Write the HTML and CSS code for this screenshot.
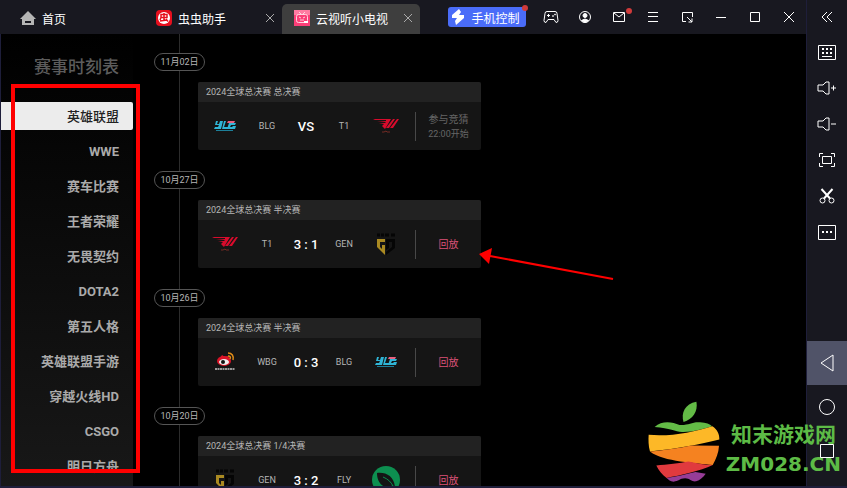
FILE: index.html
```html
<!DOCTYPE html>
<html lang="zh-CN">
<head>
    <meta charset="UTF-8">
    <meta name="viewport" content="width=device-width, initial-scale=1.0">
    <title>云视听小电视</title>
    <link rel="stylesheet" href="styles.css">
</head>
<body>

<!-- shared team logos -->
<svg class="defs" aria-hidden="true">
    <symbol id="logo-blg" viewBox="0 0 24 12">
        <path fill="#2fb5d6" d="M3 1h2l-1 3h2l1-3h3l-1 4-1 4H1l1-2h3l1-2H2zM11 1h2l-2 6h4l-1 2H9zM16 3h7l-1 2h-4l-1 2h2l1-1h3l-1 3h-8z"/>
        <path fill="#e8607f" d="M15 1h7l-1 2h-7z"/>
        <path stroke="#1d7f99" d="M3 10.500h17"/>
    </symbol>
    <symbol id="logo-t1" viewBox="0 0 26 16">
        <path fill="#d80b2c" d="M0 1h18l-6 10-3-3 2-2-5-1h6l1-1-9-1h9v-1H2zM20 1h2l-6 9h-3zM24 1h2l-6 9h-3z"/>
        <path fill="none" stroke="#752b24" d="M9 14h2l2-1 1 1h3"/>
    </symbol>
    <symbol id="logo-gen" viewBox="0 0 20 24">
        <path fill="none" stroke="#050505" stroke-width="3" d="M1 3h3M5 3h3M9 3h4M15 3h4"/>
        <path fill="#aa8a22" d="M1 7h8v3H4v5l2 2v-4h3v10l-4-4-4-4z"/>
        <path fill="#050505" d="M10 7h9v9l-9 7v-3l6-5v-5h-3v6l-3 2z"/>
    </symbol>
    <symbol id="logo-wbg" viewBox="0 0 22 20">
        <ellipse cx="10" cy="9" rx="7" ry="5" fill="#dc1428"/>
        <path fill="#dc1428" d="M4 9l4-6 3 2 3-1 1 4z"/>
        <ellipse cx="10" cy="10" rx="5" ry="3" fill="#eee"/>
        <circle cx="9" cy="10" r="2" fill="#111"/>
        <path fill="none" stroke="#e08c18" stroke-width="1.500" d="M14 1c4 0 6 3 5 7M14 4c2 0 3 1 2 3"/>
        <path stroke="#999" stroke-width="2" stroke-dasharray="2 .5" d="M1 17h20"/>
    </symbol>
    <symbol id="logo-fly" viewBox="0 0 28 28">
        <circle cx="14" cy="14" r="14" fill="#0d8f50"/>
        <path fill="#151515" d="M5 7c10-1 17 4 18 14l-3-2-1 3C10 22 5 16 5 7z"/>
        <path fill="none" stroke="#0d8f50" d="M11 11c5 2 8 5 10 9"/>
    </symbol>
</svg>

<div class="window">
    <header class="titlebar">
        <button class="home-tab" type="button">
            <svg width="16" height="14" viewBox="0 0 16 14"><path fill="#b5b5b5" d="M8 0l8 8h-2v6H2V8H0z"/><path fill="#181820" d="M5 10h6v2H5z"/></svg>
            首页
        </button>
        <div class="tab">
            <svg width="16" height="16" viewBox="0 0 16 16"><rect width="16" height="16" rx="4" fill="#e60f1e"/><circle cx="8" cy="8" r="6" fill="#fff"/><path fill="none" stroke="#e60f1e" stroke-width="1.500" d="M5 4.500h6v3H5zM8 3v8M4 11l7-1M10 9l2 2.500M5 7.500L4 10"/></svg>
            <span class="tab-name">虫虫助手</span>
            <button class="tab-close" type="button" aria-label="关闭"><svg width="10" height="10" viewBox="0 0 10 10"><path d="M1 1l8 8M9 1l-8 8"/></svg></button>
        </div>
        <div class="tab active">
            <svg width="16" height="16" viewBox="0 0 16 16"><rect width="16" height="16" fill="#fb3f78"/><path fill="#ff7ba2" d="M0 0h16v5H0z"/><g fill="none" stroke="#ffd4e0"><rect x="2.500" y="4.500" width="11" height="8" rx="2"/><path d="M5 2l2 2M11 2L9 4M5 7l2 1M11 7L9 8M6 10h4"/></g><path fill="#fff" d="M10 11h4v2h-4z"/></svg>
            <span class="tab-name">云视听小电视</span>
            <button class="tab-close" type="button" aria-label="关闭"><svg width="10" height="10" viewBox="0 0 10 10"><path d="M1 1l8 8M9 1l-8 8"/></svg></button>
        </div>
        <button class="phone-btn has-dot" type="button">
            <svg width="14" height="16" viewBox="0 0 14 16"><path fill="#fff" d="M8 0L1 6v3h5l-2 3 1 4 8-7V6H8l2-3z"/></svg>
            手机控制
        </button>
        <div class="tools">
            <button type="button" aria-label="手柄"><svg width="16" height="14" viewBox="0 0 16 14"><path d="M4 1.500h8q2 0 2 2l1 7q0 2-2 2l-2-3H5l-2 3q-2 0-2-2l1-7q0-2 2-2zM4 5.500h3M5.500 4v3"/><circle cx="10" cy="6" r=".5"/><circle cx="12" cy="4.500" r=".5"/></svg></button>
            <button type="button" aria-label="账号"><svg width="14" height="14" viewBox="0 0 14 14"><circle cx="7" cy="7" r="5.500"/><circle cx="7" cy="5.500" r="2" fill="#fff"/><path fill="#fff" d="M3.500 10.500q3.500-3 7 0Q7 14 3.500 10.500z"/></svg></button>
            <button class="has-dot mail" type="button" aria-label="消息"><svg width="12" height="10" viewBox="0 0 12 10"><path d="M.5.5h11v9H.5zM1 1l5 4 5-4"/></svg></button>
            <button type="button" aria-label="菜单"><svg width="10" height="10" viewBox="0 0 10 10"><path d="M0 .5h10M0 4.500h10M0 9.500h10"/></svg></button>
            <button type="button" aria-label="小窗"><svg width="11" height="11" viewBox="0 0 11 11"><path d="M4 9.500H.5v-9h10V5M5 5l5 5M10 6.500V10H6.500"/></svg></button>
            <button type="button" aria-label="最小化"><svg width="10" height="10" viewBox="0 0 10 10"><path d="M0 5.500h10"/></svg></button>
            <button type="button" aria-label="最大化"><svg width="10" height="10" viewBox="0 0 10 10"><path d="M.5.5h9v9h-9z"/></svg></button>
            <button type="button" aria-label="关闭窗口"><svg width="10" height="10" viewBox="0 0 10 10"><path d="M0 0l10 10M10 0L0 10"/></svg></button>
        </div>
    </header>

    <main class="screen">
        <nav class="games">
            <h1>赛事时刻表</h1>
            <a class="active" href="#">英雄联盟</a>
            <a href="#">WWE</a>
            <a href="#">赛车比赛</a>
            <a href="#">王者荣耀</a>
            <a href="#">无畏契约</a>
            <a href="#">DOTA2</a>
            <a href="#">第五人格</a>
            <a href="#">英雄联盟手游</a>
            <a href="#">穿越火线HD</a>
            <a href="#">CSGO</a>
            <a href="#">明日方舟</a>
        </nav>

        <ol class="timeline">
            <li class="day">
                <time>11月02日</time>
                <article class="card">
                    <h2>2024全球总决赛 总决赛</h2>
                    <div class="match">
                        <svg width="24" height="12"><use href="#logo-blg"/></svg>
                        <span>BLG</span>
                        <strong>VS</strong>
                        <span>T1</span>
                        <svg width="26" height="16"><use href="#logo-t1"/></svg>
                        <div class="action upcoming">参与竞猜<small>22:00开始</small></div>
                    </div>
                </article>
            </li>
            <li class="day">
                <time>10月27日</time>
                <article class="card">
                    <h2>2024全球总决赛 半决赛</h2>
                    <div class="match">
                        <svg width="26" height="16"><use href="#logo-t1"/></svg>
                        <span>T1</span>
                        <strong>3 : 1</strong>
                        <span>GEN</span>
                        <svg width="20" height="24"><use href="#logo-gen"/></svg>
                        <div class="action"><a href="#">回放</a></div>
                    </div>
                </article>
            </li>
            <li class="day">
                <time>10月26日</time>
                <article class="card">
                    <h2>2024全球总决赛 半决赛</h2>
                    <div class="match">
                        <svg width="22" height="20"><use href="#logo-wbg"/></svg>
                        <span>WBG</span>
                        <strong>0 : 3</strong>
                        <span>BLG</span>
                        <svg width="24" height="12"><use href="#logo-blg"/></svg>
                        <div class="action"><a href="#">回放</a></div>
                    </div>
                </article>
            </li>
            <li class="day">
                <time>10月20日</time>
                <article class="card">
                    <h2>2024全球总决赛 1/4决赛</h2>
                    <div class="match">
                        <svg width="20" height="24"><use href="#logo-gen"/></svg>
                        <span>GEN</span>
                        <strong>3 : 2</strong>
                        <span>FLY</span>
                        <svg width="28" height="28"><use href="#logo-fly"/></svg>
                        <div class="action"><a href="#">回放</a></div>
                    </div>
                </article>
            </li>
        </ol>
    </main>

    <aside class="sidebar">
        <button class="collapse" type="button" aria-label="收起"><svg width="12" height="12" viewBox="0 0 12 12"><path d="M6 1L1 6l5 5M11 1L6 6l5 5"/></svg></button>
        <button type="button" aria-label="键盘"><svg width="18" height="15" viewBox="0 0 18 15"><path d="M.5.5h17v14H.5zM4 11.500h10"/><path stroke-width="2" stroke-dasharray="2 2" d="M4 4h10M4 8h10"/></svg></button>
        <button type="button" aria-label="音量加"><svg width="20" height="14" viewBox="0 0 20 14"><path d="M1 4h5l3-3h3v12H9l-3-3H1zM14 7h5M16.500 4.500v5"/></svg></button>
        <button type="button" aria-label="音量减"><svg width="20" height="14" viewBox="0 0 20 14"><path d="M1 4h5l3-3h3v12H9l-3-3H1zM14 7h5"/></svg></button>
        <button type="button" aria-label="全屏"><svg width="16" height="14" viewBox="0 0 16 14"><path d="M3.500 3.500h9v7h-9zM.5 4V.5H4M12 .5h3.500V4M15.500 10v3.500H12M4 13.500H.5V10"/></svg></button>
        <button type="button" aria-label="截图"><svg width="16" height="16" viewBox="0 0 16 16"><circle cx="3.500" cy="12.500" r="2.500"/><circle cx="12.500" cy="12.500" r="2.500"/><path stroke-width="2" d="M2.500 1L11 10.500M13.500 1L5 10.500"/></svg></button>
        <button type="button" aria-label="更多"><svg width="18" height="15" viewBox="0 0 18 15"><path d="M.5.5h17v14H.5z"/><path stroke-width="2" stroke-dasharray="2 2" d="M4 7h10"/></svg></button>
        <div class="keys">
            <button class="active" type="button" aria-label="返回"><svg width="14" height="18" viewBox="0 0 14 18"><path d="M1 9L13 1v16z"/></svg></button>
            <button type="button" aria-label="主页"><svg width="16" height="16" viewBox="0 0 16 16"><circle cx="8" cy="8" r="7.500"/></svg></button>
            <button type="button" aria-label="任务"><svg width="14" height="14" viewBox="0 0 14 14"><path d="M.5.5h13v13H.5z"/></svg></button>
        </div>
    </aside>
</div>

<!-- marks drawn over the window -->
<div class="mark-box"></div>
<svg class="mark-arrow" width="136" height="34" viewBox="0 0 136 34"><path fill="#f00" d="M0 7l13-6-3 16z"/><path stroke="#f00" stroke-width="2" d="M11 9l123 23"/></svg>

<div class="watermark">
    <svg width="72" height="81" viewBox="83 214 217 244">
        <path fill="#63bb46" d="M190 277C182 250 194 222 229 216C234 246 218 268 190 277z"/>
        <path fill="#63bb46" d="M103 292C125 272 155 276 178 286C205 288 215 276 240 278C258 279 270 284 276 290C240 300 215 308 185 307C165 306 150 296 103 292z"/>
        <path fill="#fdb827" d="M85 316C150 322 220 308 277 290C292 300 299 315 298 330C240 345 170 358 89 366C84 350 84 330 85 316z"/>
        <path fill="#f58220" d="M89 366C140 362 180 355 215 348L297 349C296 370 288 390 278 407C230 400 130 398 89 366z"/>
        <path fill="#e03a3e" d="M108 408C140 405 180 401 205 396C230 402 255 406 278 407C240 425 180 438 139 446C125 435 115 422 108 408z"/>
        <path fill="#963d97" d="M139 446C170 442 200 434 226 428L257 433C248 445 240 452 228 456C215 458 210 448 195 447C178 448 175 456 160 457C150 456 145 452 139 446z"/>
    </svg>
    <div class="watermark-text">
        <b>知末游戏网</b>
        <span>ZM028.CN</span>
    </div>
</div>

</body>
</html>
```
FILE: styles.css
```css
* {
    box-sizing: border-box;
}
body {
    margin: 0;
    background-color: #000;
    color: #fff;
    font-family: Roboto, "Noto Sans CJK SC", sans-serif;
    overflow: hidden;
}
button {
    display: flex;
    align-items: center;
    justify-content: center;
    padding: 0;
    border: none;
    background: none;
    color: inherit;
    font: inherit;
    cursor: pointer;
}
a {
    color: inherit;
    text-decoration: none;
}
svg {
    flex: none;
}
.defs {
    display: none;
}
.window {
    display: grid;
    grid-template-columns: 1fr 41px;
    grid-template-rows: 34px 1fr;
    height: 100vh;
    background-color: #181820;
    border-bottom: 2px solid #1e1e3a;
}

/* title bar */
.titlebar {
    display: flex;
    align-items: center;
    font-size: 12px;
}
.home-tab {
    width: 144px;
    height: 34px;
    padding: 2px 0 0 20px;
    justify-content: flex-start;
    gap: 6px;
}
.tab {
    display: flex;
    align-items: center;
    gap: 6px;
    align-self: flex-end;
    width: 138px;
    height: 30px;
    padding: 0 7px 2px 12px;
}
.tab.active {
    background-color: #3e3e3e;
    border-radius: 5px 5px 0 0;
}
.tab-close {
    margin-left: auto;
}
.tab-close path {
    stroke: #aaa;
}
.phone-btn {
    position: relative;
    gap: 6px;
    width: 78px;
    height: 20px;
    margin-left: auto;
    margin-right: 8px;
    padding-right: 3px;
    border-radius: 3px;
    background-color: #4a6cf8;
}
.has-dot::after {
    content: "";
    position: absolute;
    top: -2px;
    right: -2px;
    width: 6px;
    height: 6px;
    border-radius: 50%;
    background-color: #d03a3a;
}
.tools {
    display: flex;
}
.tools button {
    position: relative;
    width: 34px;
    height: 34px;
}
.tools .mail::after {
    top: 8px;
    right: 4px;
}
.tools svg,
.sidebar svg {
    fill: none;
    stroke: #fff;
}

/* emulated screen */
.screen {
    grid-row: 2;
    display: flex;
    min-height: 0;
    overflow: hidden;
    background-color: #000;
    border-left: 1px solid #1e1e3a;
}
.games {
    display: flex;
    flex-direction: column;
    gap: 7px;
    width: 132px;
    padding-top: 23px;
    background: linear-gradient(#000, #181818);
    color: #aaa;
    text-align: right;
}
.games h1 {
    margin: 0 14px 18px 0;
    color: #5c5c5c;
    font-size: 17px;
    font-weight: 500;
    line-height: 20px;
}
.games a {
    flex: none;
    padding: 1px 14px 0 0;
    font-size: 13px;
    font-weight: 700;
    line-height: 27px;
}
.games a.active {
    border-radius: 0 2px 2px 0;
    background-color: #ececec;
    color: #222;
    font-weight: 500;
}
.timeline {
    flex: 1;
    align-self: flex-start;
    margin: 0 0 0 21px;
    padding: 19px 0 0;
    list-style: none;
    background: linear-gradient(#2c2c2c, #2c2c2c) 25px 0 / 1px 100% no-repeat;
}
.day {
    margin-bottom: 21px;
}
.day time {
    display: block;
    width: 51px;
    margin-bottom: 11px;
    border: 1px solid #555;
    border-radius: 9px;
    background-color: #000;
    color: #b5b5b5;
    font-size: 9px;
    line-height: 16px;
    text-align: center;
}
.card {
    width: 283px;
    margin-left: 44px;
    border-radius: 2px;
    overflow: hidden;
    background-color: #151515;
}
.card h2 {
    margin: 0;
    padding-left: 8px;
    background-color: #222;
    color: #b5b5b5;
    font-size: 9px;
    font-weight: 400;
    line-height: 20px;
}
.match {
    display: grid;
    grid-template-columns: 54px 30px 48px 28px 56px 1fr;
    align-items: center;
    justify-items: center;
    height: 48px;
}
.match span {
    color: #b5b5b5;
    font-size: 9px;
}
.match strong {
    font-size: 13px;
    font-weight: 500;
    white-space: nowrap;
}
.action {
    display: flex;
    flex-direction: column;
    align-items: center;
    justify-content: center;
    justify-self: stretch;
    height: 29px;
    margin-left: 1px;
    border-left: 1px solid #484848;
    color: #dc5278;
    font-size: 10px;
    line-height: 15px;
}
.action.upcoming {
    color: #666;
}
.action small {
    font-size: 9px;
    line-height: 14px;
}

/* right toolbar */
.sidebar {
    grid-column: 2;
    grid-row: 1 / 3;
    display: flex;
    flex-direction: column;
    padding-bottom: 13px;
    border-left: 1px solid #1e1e3a;
}
.sidebar button {
    width: 100%;
    height: 36px;
}
.sidebar .collapse {
    height: 34px;
}
.keys {
    position: relative;
    z-index: 2;
    margin-top: auto;
}
.sidebar .keys button {
    height: 44px;
}
.sidebar .keys .active {
    background-color: #505368;
}

/* overlays */
.mark-box,
.mark-arrow,
.watermark {
    position: absolute;
    pointer-events: none;
}
.mark-box {
    top: 84px;
    left: 11px;
    width: 129px;
    height: 389px;
    border: 4px solid #f00;
}
.mark-arrow {
    top: 247px;
    left: 479px;
}
.watermark {
    right: 6px;
    bottom: 6px;
    z-index: 1;
    display: flex;
    gap: 6px;
    color: #5dbb46;
}
.watermark-text {
    display: flex;
    flex-direction: column;
    align-items: center;
    justify-content: flex-end;
    padding-bottom: 4px;
}
.watermark-text b {
    font-size: 21px;
    line-height: 30px;
}
.watermark-text span {
    font-family: "DejaVu Sans", sans-serif;
    font-size: 20px;
    font-weight: 700;
    line-height: 28px;
}
```
